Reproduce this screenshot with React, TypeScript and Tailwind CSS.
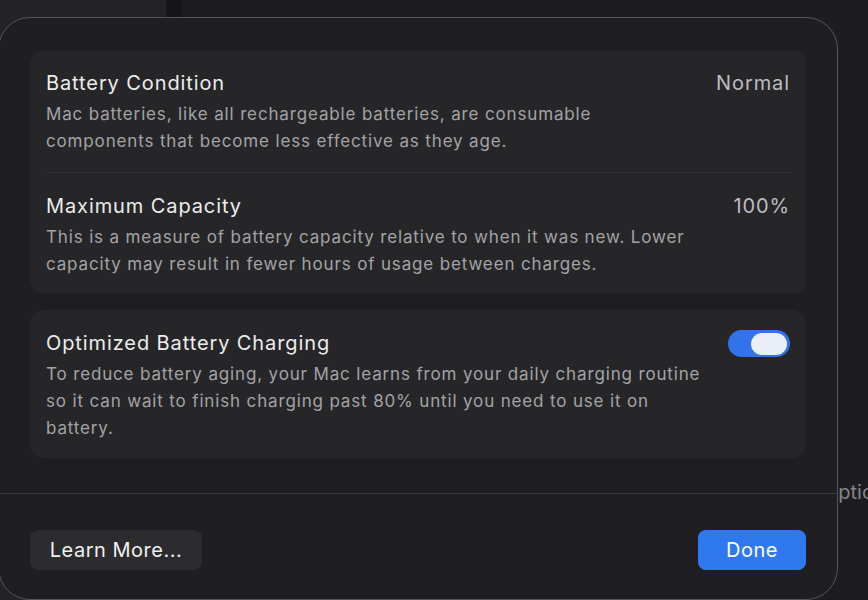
const FONT = "font-['Inter','Noto_Sans',sans-serif]";

function Row({ title, value, children }: { title: string; value?: React.ReactNode; children: React.ReactNode }) {
  return (
    <div className="flex items-start gap-6 px-4 pt-[19px]">
      <div className="flex-1">
        <div className="text-[20px] leading-[28px] tracking-[0.9px] text-[#ececec]">{title}</div>
        <p className="mt-[4px] text-[17px] leading-[27px] tracking-[0.85px] text-[#a3a3a6]">{children}</p>
      </div>
      {value}
    </div>
  );
}

function Toggle() {
  return (
    <div className="mt-[1px] flex h-[27px] w-[62px] shrink-0 items-center justify-end rounded-full bg-[#3273ea] pr-[3px]">
      <div className="h-[22px] w-[36px] rounded-full bg-[#e9eef7]" />
    </div>
  );
}

export default function App() {
  return (
    <div className={`relative h-[600px] w-[868px] overflow-hidden bg-[#1c1c1e] ${FONT}`}>
      {/* background window */}
      <div className="flex h-full">
        <div className="w-[166px] bg-[#232325]" />
        <div className="w-[16px] bg-[#161618]" />
        <div className="flex-1 bg-[#1d1d1f]" />
      </div>
      <span className="absolute left-[823px] top-[477px] text-[20px] text-[#85858a]">Optic</span>

      {/* dialog */}
      <div className="absolute left-[-2px] top-[17px] flex h-[583px] w-[840px] flex-col rounded-[32px] border border-[#55555a] bg-[#1f1f21]">
        <div className="flex flex-col gap-4 px-[31px] pt-[32px]">
          <div className="rounded-[14px] bg-[#262628] pb-[16px]">
            <Row title="Battery Condition" value={<span className="text-[20px] leading-[28px] tracking-[0.9px] text-[#bdbdc0]">Normal</span>}>
              Mac batteries, like all rechargeable batteries, are consumable
              <br />
              components that become less effective as they age.
            </Row>
            <div className="mx-4 mt-[17px] h-px bg-[#333336]" />
            <Row title="Maximum Capacity" value={<span className="text-[20px] leading-[28px] tracking-[0.9px] text-[#bdbdc0]">100%</span>}>
              This is a measure of battery capacity relative to when it was new. Lower
              <br />
              capacity may result in fewer hours of usage between charges.
            </Row>
          </div>

          <div className="rounded-[14px] bg-[#262628] pb-[16px]">
            <Row title="Optimized Battery Charging" value={<Toggle />}>
              To reduce battery aging, your Mac learns from your daily charging routine
              <br />
              so it can wait to finish charging past 80% until you need to use it on
              <br />
              battery.
            </Row>
          </div>
        </div>

        <div className="mt-[35px] h-px bg-[#3a3a3d]" />

        <div className="flex items-center justify-between px-[31px] pt-[36px]">
          <button className="h-[40px] w-[172px] rounded-[8px] bg-[#2c2c2e] text-[20px] tracking-[0.5px] text-[#f0f0f0]">
            Learn More...
          </button>
          <button className="h-[40px] w-[108px] rounded-[8px] bg-[#2f78ef] text-[20px] tracking-[0.5px] text-white">
            Done
          </button>
        </div>
      </div>
    </div>
  );
}
